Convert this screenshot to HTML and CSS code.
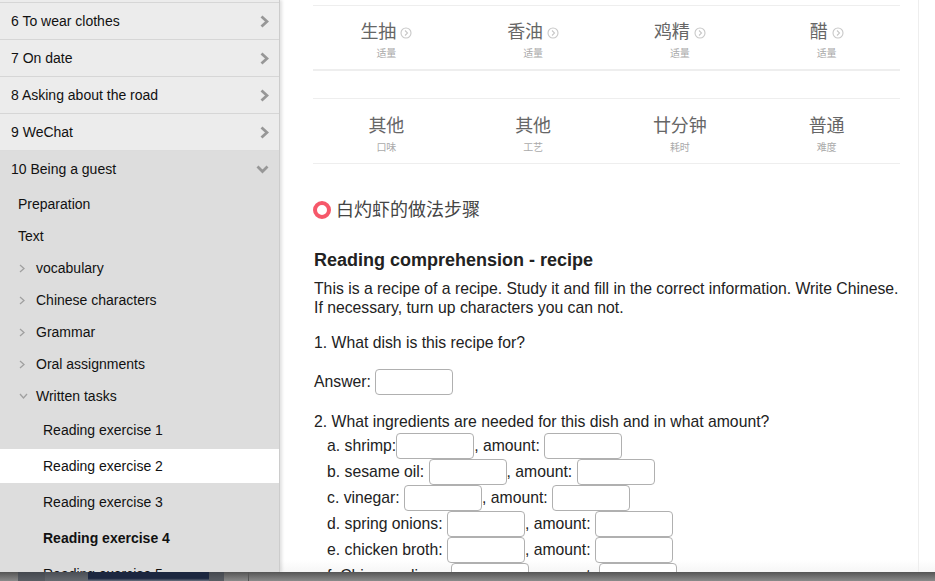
FILE: index.html
```html
<!DOCTYPE html>
<html lang="en">
<head>
<meta charset="utf-8">
<title>Reading exercise</title>
<link rel="stylesheet" href="styles.css">
</head>
<body>
<div class="app">
  <nav class="side">
    <div class="unit"><span>6 To wear clothes</span><svg class="chev" viewBox="0 0 9 13"><path d="M1.500 1.500L7 6.500l-5.500 5"/></svg></div>
    <div class="unit"><span>7 On date</span><svg class="chev" viewBox="0 0 9 13"><path d="M1.500 1.500L7 6.500l-5.500 5"/></svg></div>
    <div class="unit"><span>8 Asking about the road</span><svg class="chev" viewBox="0 0 9 13"><path d="M1.500 1.500L7 6.500l-5.500 5"/></svg></div>
    <div class="unit"><span>9 WeChat</span><svg class="chev" viewBox="0 0 9 13"><path d="M1.500 1.500L7 6.500l-5.500 5"/></svg></div>
    <div class="open">
      <div class="unit current"><span>10 Being a guest</span><svg class="chev down" viewBox="0 0 13 9"><path d="M1.500 1.500l5 5 5-5"/></svg></div>
      <div class="subs">
        <div class="sub">Preparation</div>
        <div class="sub">Text</div>
        <div class="sub"><svg class="tri" viewBox="0 0 6 9"><path d="M1 1l4 3.500L1 8"/></svg>vocabulary</div>
        <div class="sub"><svg class="tri" viewBox="0 0 6 9"><path d="M1 1l4 3.500L1 8"/></svg>Chinese characters</div>
        <div class="sub"><svg class="tri" viewBox="0 0 6 9"><path d="M1 1l4 3.500L1 8"/></svg>Grammar</div>
        <div class="sub"><svg class="tri" viewBox="0 0 6 9"><path d="M1 1l4 3.500L1 8"/></svg>Oral assignments</div>
        <div class="sub"><svg class="tri dn" viewBox="0 0 9 6"><path d="M1 1l3.500 4L8 1"/></svg>Written tasks</div>
        <div class="leaf">Reading exercise 1</div>
        <div class="leaf on">Reading exercise 2</div>
        <div class="leaf">Reading exercise 3</div>
        <div class="leaf strong">Reading exercise 4</div>
        <div class="leaf">Reading exercise 5</div>
      </div>
    </div>
  </nav>
  <main class="page">
    <div class="sheet">
      <div class="facts ing">
        <div class="fact"><div class="big">生抽<svg class="go" viewBox="0 0 12 12"><circle cx="6" cy="6" r="5"/><path d="M5 3.500L7.500 6 5 8.500"/></svg></div><div class="small">适量</div></div>
        <div class="fact"><div class="big">香油<svg class="go" viewBox="0 0 12 12"><circle cx="6" cy="6" r="5"/><path d="M5 3.500L7.500 6 5 8.500"/></svg></div><div class="small">适量</div></div>
        <div class="fact"><div class="big">鸡精<svg class="go" viewBox="0 0 12 12"><circle cx="6" cy="6" r="5"/><path d="M5 3.500L7.500 6 5 8.500"/></svg></div><div class="small">适量</div></div>
        <div class="fact"><div class="big">醋<svg class="go" viewBox="0 0 12 12"><circle cx="6" cy="6" r="5"/><path d="M5 3.500L7.500 6 5 8.500"/></svg></div><div class="small">适量</div></div>
      </div>
      <div class="facts meta">
        <div class="fact"><div class="big">其他</div><div class="small">口味</div></div>
        <div class="fact"><div class="big">其他</div><div class="small">工艺</div></div>
        <div class="fact"><div class="big">廿分钟</div><div class="small">耗时</div></div>
        <div class="fact"><div class="big">普通</div><div class="small">难度</div></div>
      </div>
      <h2 class="steps"><span class="ring"></span>白灼虾的做法步骤</h2>
      <h3 class="title">Reading comprehension - recipe</h3>
      <p class="para intro">This is a recipe of a recipe. Study it and fill in the correct information. Write Chinese. If necessary, turn up characters you can not.</p>
      <p class="para q1">1. What dish is this recipe for?</p>
      <p class="para ans">Answer: <span class="box"></span></p>
      <p class="para q2">2. What ingredients are needed for this dish and in what amount?</p>
      <div class="line">a. shrimp:<span class="box"></span>, amount: <span class="box"></span></div>
      <div class="line">b. sesame oil: <span class="box"></span>, amount: <span class="box"></span></div>
      <div class="line">c. vinegar: <span class="box"></span>, amount: <span class="box"></span></div>
      <div class="line">d. spring onions: <span class="box"></span>, amount: <span class="box"></span></div>
      <div class="line">e. chicken broth: <span class="box"></span>, amount: <span class="box"></span></div>
      <div class="line">f. Chinese olives: <span class="box"></span>, amount: <span class="box"></span></div>
    </div>
  </main>
</div>
<div class="dock"><span class="d1"></span><span class="d2"></span><span class="d3"></span><span class="d4"></span><span class="d5"></span><span class="d6"></span><span class="d7"></span></div>
</body>
</html>
```
FILE: styles.css
```css
* { box-sizing: border-box; }
html, body { margin: 0; height: 100%; overflow: hidden; background: #fff; }
body { font-family: "Liberation Sans", Arial, "Noto Sans CJK SC", sans-serif; color: #111; display: flex; flex-direction: column; }
.app { height: 572px; display: flex; overflow: hidden; flex: none; }
.side { width: 279px; flex: none; padding-top: 2px; background: #ececec; box-shadow: 1px 0 0 #ccc, 3px 0 3px rgba(0,0,0,.12); position: relative; overflow: hidden; font-size: 14px; }
.unit { height: 37px; border-top: 1px solid #d6d6d6; display: flex; align-items: center; justify-content: space-between; padding: 0 10px 0 11px; }
.current { border-top-color: #dcdcdc; }
.open { background: #ddd; }
.chev { width: 9px; height: 13px; flex: none; fill: none; stroke: #979797; stroke-width: 2.8; }
.chev.down { width: 13px; height: 9px; }
.subs { padding-top: 1px; }
.sub { height: 32px; display: flex; align-items: center; padding-left: 18px; }
.tri { width: 6px; height: 9px; margin: 0 11px 0 1px; fill: none; stroke: #a0a0a0; stroke-width: 1.3; flex: none; }
.tri.dn { width: 9px; height: 6px; margin: 0 8px 0 1px; }
.leaf { height: 34px; display: flex; align-items: center; padding-left: 43px; }
.sub + .leaf { margin-top: 1px; }
.leaf + .leaf { margin-top: 2px; }
.leaf.on { background: #fff; }
.leaf.strong { font-weight: 700; }
.page { flex: 1; min-width: 0; background: linear-gradient(#fff 560px, #f6f6f6 572px); padding-left: 34px; overflow: hidden; }
.sheet { width: 606px; height: 100%; border-right: 1px solid #eee; padding-right: 18px; padding-top: 5px; font-size: 15.75px; }
.facts { display: grid; grid-template-columns: repeat(4, 1fr); border-top: 1px solid #eee; border-bottom: 1px solid #eee; height: 66px; text-align: center; }
.ing { margin-bottom: 27px; border-bottom-width: 2px; }
.fact { padding-top: 14px; }
.big { font-size: 18px; line-height: 24px; color: #666; height: 24px; }
.go { width: 12px; height: 12px; margin-left: 4px; fill: none; stroke: #c8c8c8; stroke-width: 1.1; vertical-align: -1px; }
.small { font-size: 10px; line-height: 14px; color: #aaa; margin-top: 3px; }
.meta .big { margin-top: 1px; }
.steps { margin: 34px 0 0; font-weight: 400; font-size: 18px; line-height: 24px; color: #444; display: flex; align-items: center; }
.ring { width: 18px; height: 18px; border: 4px solid #f6586a; border-radius: 50%; margin-right: 5px; flex: none; }
.title { margin: 28px 0 0 1px; font-size: 18px; line-height: 21px; font-weight: 700; color: #222; }
.para { margin: 0 0 0 1px; line-height: 20px; color: #222; }
.intro { margin-top: 8px; margin-right: -2px; line-height: 19px; }
.q1 { margin-top: 16px; }
.ans { margin-top: 16px; height: 26px; line-height: 26px; }
.q2 { margin-top: 17px; margin-bottom: 1px; }
.line { margin-left: 14px; height: 26px; line-height: 26px; color: #222; white-space: nowrap; }
.box { display: inline-block; width: 78px; height: 26px; border: 1px solid #b0b0b0; border-radius: 4px; vertical-align: -8px; background: #fff; }
.dock { height: 9px; flex: none; background: linear-gradient(#555, #8a8a8a); display: flex; }
.d1 { width: 18px; }
.d2 { width: 27px; background: linear-gradient(#44484f, #5a5e64); }
.d3 { width: 43px; background: linear-gradient(#4a4e55, #666a70); }
.d4 { width: 121px; background: linear-gradient(#1c2740 70%, #6b7280); }
.d5 { width: 15px; background: linear-gradient(#44484f, #5a5e64); }
.d6 { width: 25px; border-right: 1px solid #555; }
.d7 { flex: 1; }
```
